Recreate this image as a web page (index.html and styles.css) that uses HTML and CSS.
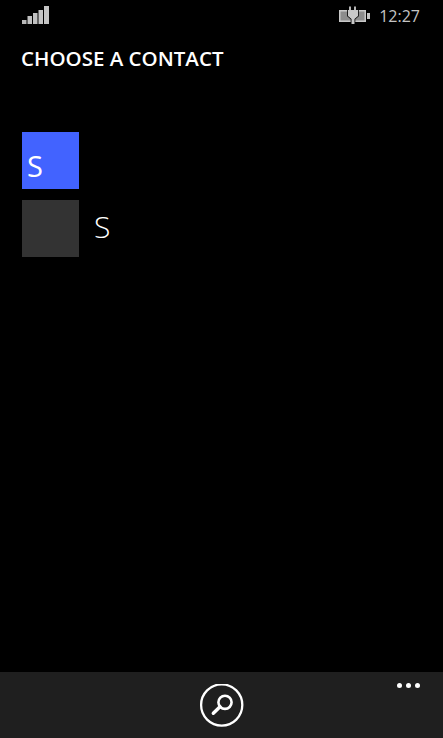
FILE: index.html
```
<!DOCTYPE html>
<html lang="en">
<head>
<meta charset="utf-8">
<title>Choose a contact</title>
<link rel="stylesheet" href="styles.css">
</head>
<body>
<div class="phone">
  <header class="status">
    <svg class="signal" width="27" height="18" viewBox="0 0 27 18">
      <rect x="0" y="14" width="4.5" height="4" fill="#b8b8b8"/>
      <rect x="5.5" y="10" width="4.5" height="8" fill="#c0c0c0"/>
      <rect x="11" y="7" width="4.5" height="11" fill="#c0c0c0"/>
      <rect x="16.5" y="4" width="4.5" height="14" fill="#c4c4c4"/>
      <rect x="22" y="0" width="5" height="18" fill="#c4c4c4"/>
    </svg>
    <div class="status-right">
      <svg class="battery" width="31" height="18" viewBox="0 0 31 18">
        <rect x="0.75" y="4.75" width="25.5" height="10.5" fill="#8c8c8c" stroke="#c8c8c8" stroke-width="1.5"/>
        <rect x="28" y="7" width="3" height="6" fill="#c4c4c4"/>
        <path d="M9 4H19V10L15.5 13V18H12.5V13L9 10Z" fill="#c8c8c8" stroke="#000" stroke-width="1.6" paint-order="stroke"/>
        <path d="M11 0.5V4M16 0.5V4" fill="none" stroke="#c8c8c8" stroke-width="1.8"/>
      </svg>
      <span class="time">12:27</span>
    </div>
  </header>
  <main class="content">
    <h1 class="title">CHOOSE A CONTACT</h1>
    <ul class="contacts">
      <li class="contact">
        <div class="tile tile-accent">S</div>
      </li>
      <li class="contact">
        <div class="tile tile-plain"></div>
        <span class="name">S</span>
      </li>
    </ul>
  </main>
  <footer class="appbar">
    <button class="round-btn" type="button" aria-label="Search">
      <svg width="45" height="45" viewBox="0 0 45 45">
        <circle cx="22.7" cy="21" r="20.6" fill="none" stroke="#fff" stroke-width="2.3"/>
        <circle cx="26" cy="18.3" r="6.6" fill="none" stroke="#fff" stroke-width="2.6"/>
        <path d="M21 22.7L14.3 29.3" fill="none" stroke="#fff" stroke-width="3.4" stroke-linecap="round"/>
      </svg>
    </button>
    <div class="more"><i></i><i></i><i></i></div>
  </footer>
</div>
</body>
</html>
```
FILE: styles.css
```
* { box-sizing: border-box; }
html, body { margin: 0; padding: 0; background: #000; }
body { font-family: "Open Sans", "Noto Sans", "Liberation Sans", sans-serif; color: #fff; }
.phone { width: 443px; height: 738px; display: flex; flex-direction: column; overflow: hidden; background: #000; }
.status { height: 32px; flex: none; display: flex; justify-content: space-between; align-items: flex-start; padding: 6px 23px 0 22px; }
.signal { display: block; }
.status-right { display: flex; align-items: flex-start; gap: 9px; }
.battery { display: block; }
.time { font-size: 16px; line-height: 20px; color: #c4c4c4; }
.content { flex: 1; padding: 0 0 0 22px; }
.title { margin: 11px 0 0 -1px; font-size: 20.5px; line-height: 30px; font-weight: 600; color: #fff; }
.contacts { list-style: none; margin: 59px 0 0; padding: 0; display: flex; flex-direction: column; gap: 11px; }
.contact { display: flex; align-items: center; gap: 15px; }
.tile { width: 57px; height: 57px; flex: none; }
.tile-accent { background: #4263ff; font-size: 29px; line-height: 34px; padding: 17px 0 0 5px; font-weight: 400; }
.tile-plain { background: #333; }
.name { font-size: 30px; line-height: 36px; font-weight: 300; padding-bottom: 3px; }
.appbar { height: 66px; flex: none; background: #1f1f1f; position: relative; display: flex; justify-content: center; padding-top: 12px; }
.round-btn { width: 45px; height: 45px; padding: 0; margin: 0; border: 0; background: none; display: block; }
.round-btn svg { display: block; }
.more { position: absolute; top: 10.5px; right: 23px; display: flex; gap: 4px; }
.more i { display: block; width: 5px; height: 5px; border-radius: 50%; background: #fff; }
```
